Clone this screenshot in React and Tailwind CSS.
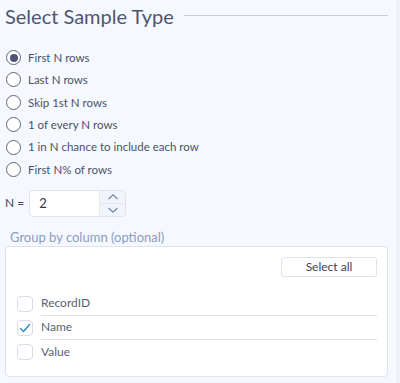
import React, { useState } from "react";

const OPTIONS = [
  "First N rows",
  "Last N rows",
  "Skip 1st N rows",
  "1 of every N rows",
  "1 in N chance to include each row",
  "First N% of rows",
];

const COLUMNS = [
  { name: "RecordID", checked: false },
  { name: "Name", checked: true },
  { name: "Value", checked: false },
];

function Radio({ checked }) {
  return (
    <span className="flex h-[15px] w-[15px] shrink-0 items-center justify-center rounded-full border-[1.5px] border-[#5f667a] bg-white">
      {checked ? <span className="h-[8px] w-[8px] rounded-full bg-[#4b5573]" /> : null}
    </span>
  );
}

function Checkbox({ checked }) {
  return (
    <span className="flex h-[16px] w-[16px] shrink-0 items-center justify-center rounded-[4px] border border-[#d5dbe7] bg-white">
      {checked ? (
        <svg width="12" height="12" viewBox="0 0 12 12" fill="none">
          <path d="M1.5 6.5 L4.5 9.5 L10.5 2.5" stroke="#2a88d6" strokeWidth="1.4" strokeLinecap="round" strokeLinejoin="round" />
        </svg>
      ) : null}
    </span>
  );
}

export default function App() {
  const [mode] = useState(0);
  return (
    <div
      className="flex h-[383px] w-[400px] bg-[#f5f8fe] text-[#4b5268]"
      style={{ fontFamily: '"Segoe UI", Lato, "Open Sans", sans-serif' }}
    >
      <div className="flex-1 pl-[5px] pr-[8px]">
        {/* Header */}
        <div className="flex h-[31px] items-center gap-[10px]">
          <div className="text-[20px] leading-none text-[#4e5570]">Select Sample Type</div>
          <div className="h-px flex-1 bg-[#c9ced8]" />
        </div>

        {/* Radios */}
        <div className="mt-[19px] flex flex-col gap-[7.4px] pl-[1px]">
          {OPTIONS.map((label, i) => (
            <div key={label} className="flex h-[15px] items-center gap-[7px]">
              <Radio checked={i === mode} />
              <span className="text-[11.5px] text-[#4b5268]">{label}</span>
            </div>
          ))}
        </div>

        {/* N input */}
        <div className="mt-[13px] flex items-center gap-[5px]">
          <span className="text-[12px] text-[#3e4456]">N =</span>
          <div className="flex h-[27px] w-[97px] overflow-hidden rounded-[4px] border border-[#dfe4ee] bg-white">
            <div className="flex flex-1 items-center pl-[9px] text-[13px] text-[#2c3550]">2</div>
            <div className="flex w-[26px] flex-col border-l border-[#e4e8f0] bg-[#f1f4f9]">
              <div className="flex flex-1 items-center justify-center">
                <svg width="12" height="8" viewBox="0 0 12 8" fill="none">
                  <path d="M1.5 6 L6 1.8 L10.5 6" stroke="#6e84a8" strokeWidth="1.2" />
                </svg>
              </div>
              <div className="h-px bg-[#e4e8f0]" />
              <div className="flex flex-1 items-center justify-center">
                <svg width="12" height="8" viewBox="0 0 12 8" fill="none">
                  <path d="M1.5 2 L6 6.2 L10.5 2" stroke="#6e84a8" strokeWidth="1.2" />
                </svg>
              </div>
            </div>
          </div>
        </div>

        {/* Group by */}
        <div className="mt-[14px] pl-[5px] text-[13px] leading-none text-[#8b9cc0]">
          Group by column (optional)
        </div>
        <div className="mt-[2px] h-[131px] w-[383px] rounded-[4px] border border-[#dde2ec] bg-white pt-[10px]">
          <div className="flex justify-end pr-[10px]">
            <button className="h-[20px] w-[96px] rounded-[3px] border border-[#dde3ee] bg-white text-[12px] leading-none text-[#3e4456]">
              Select all
            </button>
          </div>
          <div className="mt-[15px] flex flex-col pl-[11px] pr-[10px]">
            {COLUMNS.map((c, i) => (
              <div key={c.name} className="flex items-center gap-[8px]">
                <Checkbox checked={c.checked} />
                <div
                  className={
                    "flex h-[24px] flex-1 items-center text-[12px] text-[#5b5f72] " +
                    (i < COLUMNS.length - 1 ? "border-b border-[#dde2ec]" : "")
                  }
                >
                  {c.name}
                </div>
              </div>
            ))}
          </div>
        </div>
      </div>
      <div className="w-[4px] bg-[#eef1fa]" />
    </div>
  );
}
